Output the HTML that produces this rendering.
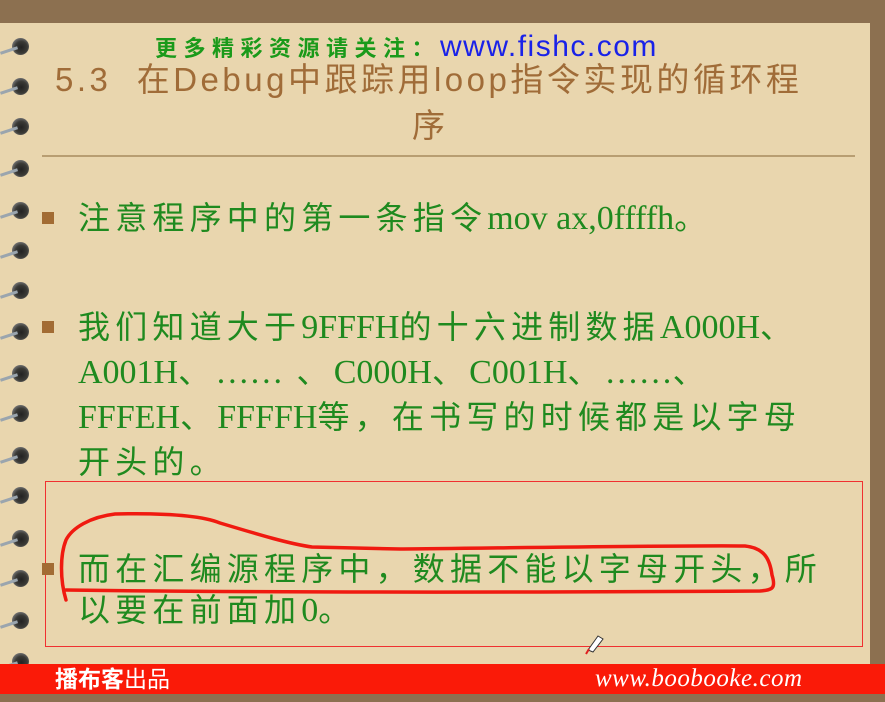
<!DOCTYPE html>
<html><head><meta charset="utf-8"><style>
*{margin:0;padding:0}
body{width:885px;height:702px;overflow:hidden;background:#8c7050;position:relative;font-family:"Liberation Serif","Noto Sans CJK SC",serif}
#paper{position:absolute;left:0;top:23px;width:870px;height:641px;background:#e9d6ae}
.t{position:absolute;white-space:nowrap;line-height:1}
.g{color:#1f8a1f;font-size:32px;letter-spacing:5.2px}
.g i{font-style:normal;font-size:34px;letter-spacing:0}
.b{position:absolute;left:42px;width:12px;height:12px;background:#a26c34}
.ring{position:absolute;left:12px;width:17px;height:17px;border-radius:50%;background:radial-gradient(circle at 55% 55%,#222 0,#3a3a36 45%,#777 75%,#d8ccb0 100%)}
.wire{position:absolute;left:0;width:18px;height:3px;background:#9aa5ae;transform:rotate(-18deg)}
</style></head><body>
<div id="paper"></div>
<div id="rings"></div>
<script>
var ys=[46,86,126,168,210,250,290,331,373,413,455,495,538,578,620,661];
var h='';ys.forEach(function(y){h+='<div class="ring" style="top:'+(y-8)+'px"></div><div class="wire" style="top:'+(y+3)+'px"></div>';});
document.getElementById('rings').innerHTML=h;
</script>
<div class="t" style="left:155px;top:32px;font-size:22px;letter-spacing:6.5px;color:#1a9a1a;font-family:'Noto Sans CJK SC',sans-serif;font-weight:bold">更多精彩资源请关注：<span style="color:#1a22e8;font-family:'Liberation Sans',sans-serif;font-size:30px;letter-spacing:1.5px;font-weight:normal">www.fishc.com</span></div>
<div class="t" style="left:55px;top:63px;font-size:33px;color:#a06c38;font-family:'Liberation Sans','Noto Sans CJK SC',sans-serif;letter-spacing:3.5px">5.3&nbsp; 在Debug中跟踪用loop指令实现的循环程</div>
<div class="t" style="left:412px;top:107px;font-size:33px;color:#a06c38;font-family:'Noto Sans CJK SC',sans-serif">序</div>
<div style="position:absolute;left:42px;top:155px;width:813px;height:2px;background:#b89e72"></div>

<div class="b" style="top:212px"></div>
<div class="t g" style="left:78px;top:202px">注意程序中的第一条指令<i>mov ax,0ffffh</i>。</div>

<div class="b" style="top:321px"></div>
<div class="t g" style="left:78px;top:311px">我们知道大于<i>9FFFH</i>的十六进制数据<i>A000H</i>、</div>
<div class="t g" style="left:78px;top:356px"><i>A001H</i>、<i>……</i> 、<i>C000H</i>、<i>C001H</i>、<i>……</i>、</div>
<div class="t g" style="left:78px;top:401px"><i>FFFEH</i>、<i>FFFFH</i>等，在书写的时候都是以字母</div>
<div class="t g" style="left:78px;top:446px">开头的。</div>

<div style="position:absolute;left:45px;top:481px;width:816px;height:164px;border:1px solid #f03030"></div>
<div class="b" style="top:563px"></div>
<div class="t g" style="left:78px;top:553px">而在汇编源程序中，数据不能以字母开头，所</div>
<div class="t g" style="left:78px;top:594px">以要在前面加<i>0</i>。</div>

<svg style="position:absolute;left:0;top:0" width="885" height="702">
<path d="M66,600 C60,580 60,555 66,540 C72,528 90,517 115,514 C160,513 200,515 220,523 C260,535 290,544 312,547 L400,549 C500,548 700,545 745,546 C765,548 770,560 772,575 C776,588 773,590 760,591 C600,592 300,593 66,590" fill="none" stroke="#f01a10" stroke-width="3.5" stroke-linecap="round"/>
<path d="M588,650 L598,636 L603,639 L593,652 Z" fill="#fff" stroke="#333" stroke-width="1"/>
<path d="M586,654 L589,649" stroke="#e02020" stroke-width="2"/>
</svg>

<div style="position:absolute;left:0;top:664px;width:885px;height:30px;background:#fa1a08"></div>
<div class="t" style="left:55px;top:666px;font-size:23px;color:#fff;font-family:'Noto Sans CJK SC',sans-serif;font-weight:bold">播布客<span style="font-weight:normal">出品</span></div>
<div class="t" style="left:595px;top:666px;font-size:25px;letter-spacing:0.5px;color:#fff;font-style:italic">www.boobooke.com</div>
</body></html>
